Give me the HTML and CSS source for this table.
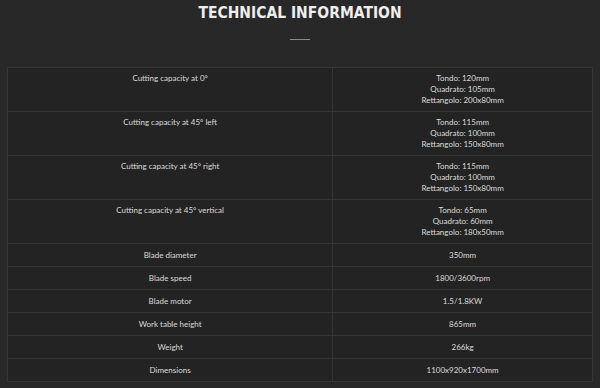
FILE: index.html
```html
<!DOCTYPE html>
<html>
<head>
<meta charset="utf-8">
<link rel="stylesheet" href="styles.css">
</head>
<body>
<section class="tech">
  <h2 class="tech-title">TECHNICAL INFORMATION</h2>
  <div class="tech-rule"></div>
  <table class="spec">
    <tbody>
      <tr class="multi"><td class="k">Cutting capacity at 0°</td><td class="v">Tondo: 120mm<br>Quadrato: 105mm<br>Rettangolo: 200x80mm</td></tr>
      <tr class="multi"><td class="k">Cutting capacity at 45° left</td><td class="v">Tondo: 115mm<br>Quadrato: 100mm<br>Rettangolo: 150x80mm</td></tr>
      <tr class="multi"><td class="k">Cutting capacity at 45° right</td><td class="v">Tondo: 115mm<br>Quadrato: 100mm<br>Rettangolo: 150x80mm</td></tr>
      <tr class="multi"><td class="k">Cutting capacity at 45° vertical</td><td class="v">Tondo: 65mm<br>Quadrato: 60mm<br>Rettangolo: 180x50mm</td></tr>
      <tr><td class="k">Blade diameter</td><td class="v">350mm</td></tr>
      <tr><td class="k">Blade speed</td><td class="v">1800/3600rpm</td></tr>
      <tr><td class="k">Blade motor</td><td class="v">1.5/1.8KW</td></tr>
      <tr><td class="k">Work table height</td><td class="v">865mm</td></tr>
      <tr><td class="k">Weight</td><td class="v">266kg</td></tr>
      <tr><td class="k">Dimensions</td><td class="v">1100x920x1700mm</td></tr>
    </tbody>
  </table>
</section>
</body>
</html>
```

FILE: styles.css
```css
html, body {
  margin: 0;
  padding: 0;
  background: #282828;
}
body {
  font-family: Lato, "Noto Sans", sans-serif;
  color: #dcdcdc;
}
.tech {
  padding: 0 7px;
  display: flex;
  flex-direction: column;
  align-items: center;
}
.tech-title {
  margin: 3px 0 0;
  font-family: "DejaVu Sans Condensed", "DejaVu Sans", sans-serif;
  font-stretch: condensed;
  font-weight: bold;
  font-size: 15.5px;
  line-height: 20px;
  color: #eeeeee;
}
.tech-rule {
  width: 20px;
  height: 1px;
  background: #8a8a8a;
  margin: 16px 0 27px;
}
.spec {
  width: 100%;
  border-collapse: collapse;
  background: #232323;
  border: 1px solid #353535;
}
.spec td {
  border: 1px solid #353535;
  text-align: center;
  vertical-align: top;
  font-size: 8px;
  line-height: 11px;
  padding: 6px 4px 5px;
}
.spec tr.multi td {
  padding: 5px 4px 5px;
}
.spec td.k { width: 55.6%; }
```
